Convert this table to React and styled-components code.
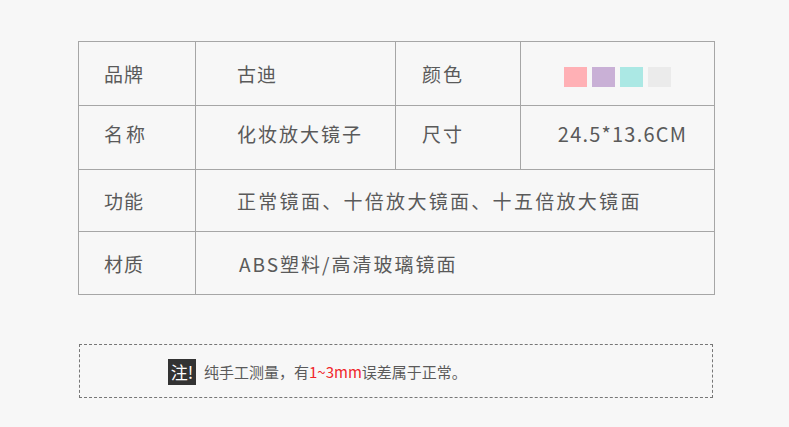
import React from 'react';
import styled, { createGlobalStyle } from 'styled-components';

const Global = createGlobalStyle`
  html, body {
    margin: 0;
    background: #f7f7f7;
  }
  body {
    font-family: "Noto Sans CJK SC", "Noto Sans", sans-serif;
    color: #555;
  }
`;

const Page = styled.div`
  width: 789px;
  height: 427px;
  padding: 41px 0 0 78px;
  box-sizing: border-box;
`;

const Table = styled.div`
  display: grid;
  grid-template-columns: 117px 200px 125px 194px;
  grid-template-rows: 64px 64px 62px 63px;
  width: 637px;
  box-sizing: border-box;
  border-top: 1px solid #a6a6a6;
  border-left: 1px solid #a6a6a6;
`;

const Cell = styled.div`
  display: flex;
  align-items: center;
  justify-content: ${(p) => (p.$center ? 'center' : 'flex-start')};
  padding-left: ${(p) => (p.$center ? p.$shift || 0 : p.$pad || 25)}px;
  padding-bottom: ${(p) => p.$lift || 0}px;
  padding-top: ${(p) => p.$drop || 0}px;
  grid-column: ${(p) => p.$span || 'auto'};
  border-right: 1px solid #a6a6a6;
  border-bottom: 1px solid #a6a6a6;
  box-sizing: border-box;
  font-size: ${(p) => p.$size || 19}px;
  letter-spacing: ${(p) => p.$ls ?? 1}px;
  color: #5a5a5a;
  white-space: nowrap;
`;

const Swatches = styled.div`
  display: flex;
  gap: 5px;
`;

const Swatch = styled.span`
  width: 23px;
  height: 20px;
  background: ${(p) => p.$color};
`;

const Note = styled.div`
  margin-top: 49px;
  margin-left: 1px;
  width: 634px;
  height: 54px;
  box-sizing: border-box;
  border: 1px dashed #777;
  display: flex;
  align-items: center;
  padding-left: 88px;
  font-size: 15px;
  color: #5a5a5a;
`;

const Badge = styled.span`
  display: inline-flex;
  align-items: center;
  justify-content: center;
  width: 28px;
  height: 26px;
  background: #333;
  color: #fff;
  font-size: 17px;
  margin-right: 8px;
  margin-top: 1px;
`;

const Red = styled.span`
  color: #f0262b;
`;

const colors = ['#ffb0b5', '#c9b0d6', '#abe8e4', '#ebebeb'];

export default function App() {
  return (
    <Page>
      <Global />
      <Table>
        <Cell>品牌</Cell>
        <Cell $pad={41}>古迪</Cell>
        <Cell $pad={26} $ls={2}>颜色</Cell>
        <Cell $center $drop={7}>
          <Swatches>
            {colors.map((c) => (
              <Swatch key={c} $color={c} />
            ))}
          </Swatches>
        </Cell>

        <Cell $ls={3} $lift={8}>名称</Cell>
        <Cell $pad={41} $ls={2} $lift={8}>化妆放大镜子</Cell>
        <Cell $pad={26} $ls={2} $lift={8}>尺寸</Cell>
        <Cell $center $shift={10} $size={20} $ls={1.2} $lift={8}>24.5*13.6CM</Cell>

        <Cell>功能</Cell>
        <Cell $span="2 / 5" $pad={41} $ls={2.3}>
          正常镜面、十倍放大镜面、十五倍放大镜面
        </Cell>

        <Cell>材质</Cell>
        <Cell $span="2 / 5" $pad={43} $ls={2}>
          ABS塑料/高清玻璃镜面
        </Cell>
      </Table>

      <Note>
        <Badge>注!</Badge>
        纯手工测量，有<Red>1~3mm</Red>误差属于正常。
      </Note>
    </Page>
  );
}
